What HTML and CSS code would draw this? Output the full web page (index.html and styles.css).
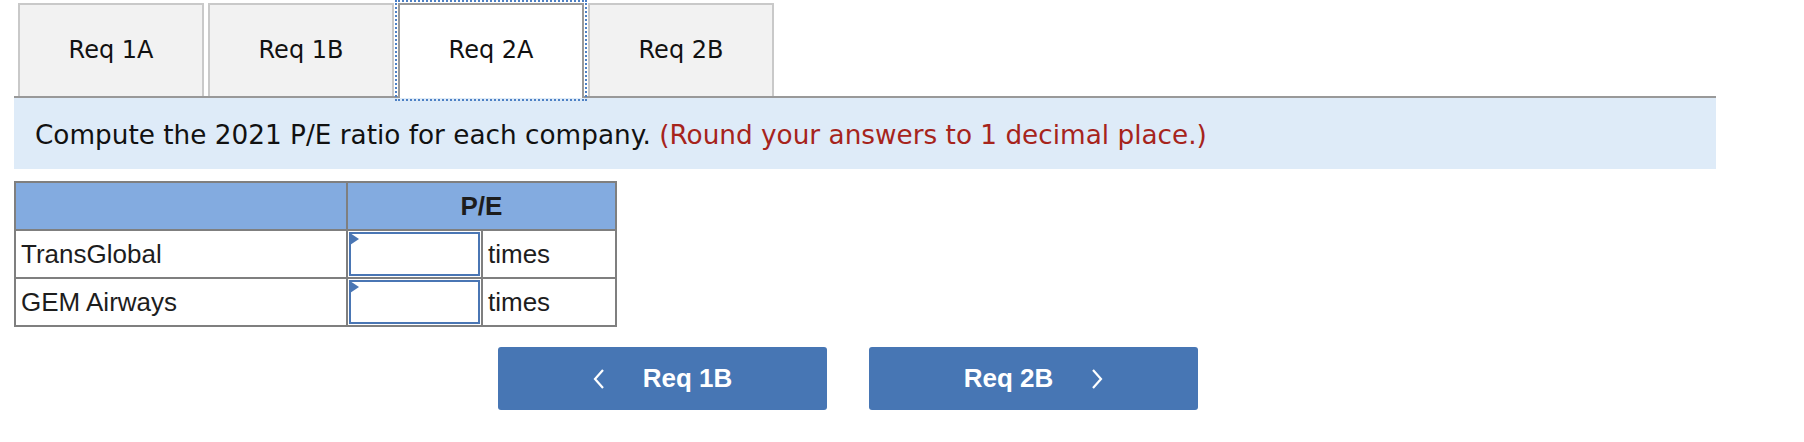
FILE: index.html
```html
<!DOCTYPE html>
<html>
<head>
<meta charset="utf-8">
<link rel="stylesheet" href="styles.css">
</head>
<body>
<div class="page">
  <div class="tabs">
    <div class="tab">Req 1A</div>
    <div class="tab">Req 1B</div>
    <div class="tab active">Req 2A</div>
    <div class="tab">Req 2B</div>
  </div>
  <div class="panel">
    <p class="text">Compute the 2021 P/E ratio for each company. <span class="hint">(Round your answers to 1 decimal place.)</span></p>
  </div>
  <table class="grid">
    <colgroup>
      <col class="c1"><col class="c2"><col class="c3">
    </colgroup>
    <tr class="head">
      <th></th>
      <th colspan="2">P/E</th>
    </tr>
    <tr class="row">
      <td class="label">TransGlobal</td>
      <td class="inp"><div class="box"><span class="flag"></span></div></td>
      <td class="unit">times</td>
    </tr>
    <tr class="row">
      <td class="label">GEM Airways</td>
      <td class="inp"><div class="box"><span class="flag"></span></div></td>
      <td class="unit">times</td>
    </tr>
  </table>
  <div class="nav">
    <div class="btn prev">
      <svg class="chev" width="12" height="20" viewBox="0 0 12 20"><polyline points="10,1 2,10 10,19" fill="none" stroke="#fff" stroke-width="2.2"/></svg>
      <span>Req 1B</span>
    </div>
    <div class="btn next">
      <span>Req 2B</span>
      <svg class="chev" width="12" height="20" viewBox="0 0 12 20"><polyline points="2,1 10,10 2,19" fill="none" stroke="#fff" stroke-width="2.2"/></svg>
    </div>
  </div>
</div>
</body>
</html>
```
FILE: styles.css
```css
html, body {
  margin: 0;
  padding: 0;
  background: #fff;
}
.page {
  padding: 3px 0 0 14px;
  width: 1702px;
}
.tabs {
  display: flex;
  gap: 4px;
  padding-left: 4px;
  height: 93px;
  position: relative;
  z-index: 1;
}
.tab {
  box-sizing: border-box;
  width: 186px;
  height: 93px;
  border: 2px solid #c9c9c9;
  border-bottom: none;
  background: #f2f2f2;
  font-family: "DejaVu Sans", Verdana, sans-serif;
  font-size: 24px;
  color: #111;
  display: flex;
  align-items: center;
  justify-content: center;
  padding-bottom: 2px;
}
.tab.active {
  background: #fff;
  border-color: #9a9a9a;
  height: 95px;
  padding-bottom: 4px;
  outline: 2px dotted #4d80c4;
  outline-offset: 1px;
}
.panel {
  border-top: 2px solid #999;
  background: #deebf8;
  height: 71px;
  display: flex;
  align-items: center;
  padding-left: 21px;
}
.text {
  margin: 0;
  font-family: "DejaVu Sans", Verdana, sans-serif;
  font-size: 26.3px;
  color: #111;
  padding-top: 2px;
}
.hint {
  color: #a6241c;
}
.grid {
  margin-top: 12px;
  border-collapse: collapse;
  border: 2px solid #7f7f7f;
  font-family: "Liberation Sans", Arial, sans-serif;
  font-size: 26px;
  color: #1d1d1d;
}
.c1 { width: 332px; }
.c2 { width: 135px; }
.c3 { width: 134px; }
.grid th, .grid td {
  border: 2px solid #7f7f7f;
  padding: 0;
}
.head th {
  background: #83abe0;
  height: 46px;
  font-weight: bold;
  text-align: center;
}
.row td {
  height: 44px;
}
.label, .unit {
  padding-left: 5px !important;
}
.inp {
  padding: 1px !important;
}
.box {
  height: 40px;
  border: 2px solid #4a76b4;
  position: relative;
  background: #fff;
}
.flag {
  position: absolute;
  left: -1px;
  top: -1px;
  width: 0;
  height: 0;
  border-top: 6px solid transparent;
  border-bottom: 6px solid transparent;
  border-left: 9px solid #4a76b4;
}
.nav {
  display: flex;
  gap: 42px;
  margin-top: 20px;
  padding-left: 484px;
}
.btn {
  width: 329px;
  height: 63px;
  background: #4776b4;
  border-radius: 3px;
  display: flex;
  align-items: center;
  justify-content: center;
  gap: 38px;
  color: #fff;
  font-family: "Liberation Sans", Arial, sans-serif;
  font-weight: bold;
  font-size: 26px;
}
.chev { display: block; }
```
